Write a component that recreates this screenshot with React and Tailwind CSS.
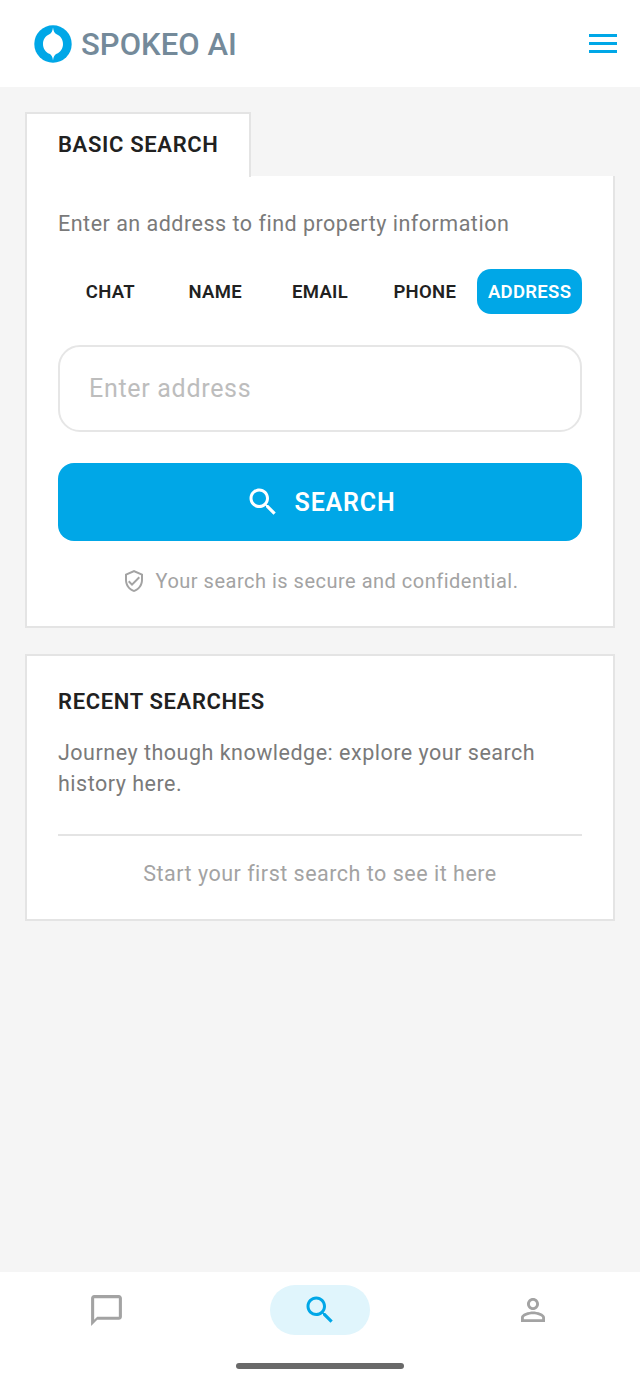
import React from 'react';

function Icon({ d, className }) {
  return (
    <svg viewBox="0 0 24 24" fill="currentColor" className={className}>
      <path d={d} />
    </svg>
  );
}

const SEARCH = 'M15.5 14h-.79l-.28-.27C15.41 12.59 16 11.11 16 9.5 16 5.91 13.09 3 9.5 3S3 5.91 3 9.5 5.91 16 9.5 16c1.61 0 3.09-.59 4.23-1.57l.27.28v.79l5 4.99L20.49 19l-4.99-5zm-6 0C7.01 14 5 11.99 5 9.5S7.01 5 9.5 5 14 7.01 14 9.5 11.99 14 9.5 14z';
const CHAT = 'M20 2H4c-1.1 0-2 .9-2 2v18l4-4h14c1.1 0 2-.9 2-2V4c0-1.1-.9-2-2-2zm0 14H6l-2 2V4h16v12z';
const PERSON = 'M12 5.9c1.16 0 2.1.94 2.1 2.1s-.94 2.1-2.1 2.1S9.9 9.16 9.9 8s.94-2.1 2.1-2.1m0 9c2.97 0 6.1 1.46 6.1 2.1v1.1H5.9V17c0-.64 3.13-2.1 6.1-2.1M12 4C9.79 4 8 5.79 8 8s1.79 4 4 4 4-1.79 4-4-1.79-4-4-4zm0 9c-2.67 0-8 1.34-8 4v3h16v-3c0-2.66-5.33-4-8-4z';
const SHIELD = 'M12 1L3 5v6c0 5.55 3.84 10.74 9 12 5.16-1.26 9-6.45 9-12V5l-9-4zm7 10c0 4.52-2.98 8.69-7 9.93-4.02-1.24-7-5.41-7-9.93V6.3l7-3.11 7 3.11V11zm-11.59.59L6 13l4 4 8-8-1.41-1.42L10 14.17z';

function Logo() {
  return (
    <svg viewBox="0 0 38 38" className="w-[38px] h-[38px]">
      <circle cx="19" cy="19" r="18.7" fill="#00a7e7" />
      <path d="M19 2.5 C19.4 6 20.4 8 22.6 9.2 C26.4 10.6 29 14.4 29 19 C29 23.6 26.4 27.4 22.6 28.8 C20.4 30 19.4 32 19 35.5 C18.6 32 17.6 30 15.4 28.8 C11.6 27.4 9 23.6 9 19 C9 14.4 11.6 10.6 15.4 9.2 C17.6 8 18.6 6 19 2.5 Z" fill="#fff" />
    </svg>
  );
}

const tabs = ['CHAT', 'NAME', 'EMAIL', 'PHONE', 'ADDRESS'];

export default function App() {
  return (
    <div className="w-[640px] h-[1385px] flex flex-col bg-[#f5f5f5] font-['Roboto',sans-serif] overflow-hidden">
      <header className="h-[87px] shrink-0 bg-white flex items-center justify-between pl-[34px] pr-[23px]">
        <div className="flex items-center gap-[9px]">
          <Logo />
          <span className="pt-[1px] text-[31px] leading-none font-medium tracking-[0.05px] text-[#748a9a]">SPOKEO AI</span>
        </div>
        <div className="flex flex-col gap-[5px] w-[28px] -mt-[1px]">
          <div className="h-[3px] bg-[#00a7e7]" />
          <div className="h-[3px] bg-[#00a7e7]" />
          <div className="h-[3px] bg-[#00a7e7]" />
        </div>
      </header>

      <main className="flex-1 px-[25px] pt-[25px]">
        <div className="relative z-10 w-[226px] h-[65px] -mb-px bg-white border-2 border-b-0 border-[#e4e4e4] pl-[31px] pt-[17px]">
          <span className="text-[22px] leading-[28px] font-semibold tracking-[0.65px] text-[#212121]">BASIC SEARCH</span>
        </div>
        <section className="w-[590px] h-[452px] bg-white border-2 border-t-0 border-[#e4e4e4] px-[31px]">
          <p className="pt-[34px] text-[21.5px] leading-[28px] tracking-[0.5px] text-[#7a7a7a]">
            Enter an address to find property information
          </p>
          <div className="mt-[31px] grid grid-cols-5 h-[45px]">
            {tabs.map((t) => (
              <div
                key={t}
                className={
                  t === 'ADDRESS'
                    ? 'flex items-center justify-center pt-[2px] rounded-[14px] bg-[#00a7e7] text-white text-[18.5px] font-semibold tracking-[0.3px]'
                    : 'flex items-center justify-center pt-[2px] text-[#212121] text-[18.5px] font-semibold tracking-[0.3px]'
                }
              >
                {t}
              </div>
            ))}
          </div>
          <div className="mt-[31px] h-[87px] rounded-[22px] border-2 border-[#e6e6e6] flex items-center pl-[29px] text-[25px] tracking-[0.7px] text-[#bdbdbd]">
            Enter address
          </div>
          <button className="mt-[31px] w-full h-[78px] rounded-[16px] bg-[#00a7e7] flex items-center justify-center gap-[14px] text-white">
            <Icon d={SEARCH} className="w-[36px] h-[36px]" />
            <span className="pt-[1px] text-[25px] font-semibold tracking-[0.8px]">SEARCH</span>
          </button>
          <div className="mt-[27px] flex items-center justify-center gap-[10px] text-[#a3a3a3]">
            <Icon d={SHIELD} className="w-[24px] h-[24px]" />
            <span className="text-[20px] leading-[26px] tracking-[0.5px]">Your search is secure and confidential.</span>
          </div>
        </section>

        <section className="mt-[26px] w-[590px] h-[267px] bg-white border-2 border-[#e4e4e4] px-[31px] pt-[32px]">
          <h2 className="text-[22px] leading-[28px] font-semibold tracking-[0.65px] text-[#212121]">RECENT SEARCHES</h2>
          <p className="mt-[21px] text-[21.5px] leading-[31px] tracking-[0.5px] text-[#7a7a7a]">
            Journey though knowledge: explore your search history here.
          </p>
          <div className="mt-[35px] h-[2px] bg-[#e4e4e4]" />
          <p className="mt-[24px] text-center text-[21.5px] leading-[28px] tracking-[0.5px] text-[#a3a3a3]">
            Start your first search to see it here
          </p>
        </section>
      </main>

      <nav className="relative h-[113px] shrink-0 bg-white">
        <div className="grid grid-cols-3 pt-[13px] w-full">
          <div className="flex justify-center h-[50px] items-center">
            <Icon d={CHAT} className="w-[37px] h-[37px] text-[#a3a3a3]" />
          </div>
          <div className="flex justify-center">
            <div className="w-[100px] h-[50px] rounded-[25px] bg-[#e0f5fc] flex items-center justify-center">
              <Icon d={SEARCH} className="w-[36px] h-[36px] text-[#00a7e7]" />
            </div>
          </div>
          <div className="flex justify-center h-[50px] items-center">
            <Icon d={PERSON} className="w-[36px] h-[36px] text-[#a3a3a3]" />
          </div>
        </div>
        <div className="absolute left-[236px] top-[91px] w-[168px] h-[6px] rounded-full bg-[#696969]" />
      </nav>
    </div>
  );
}
